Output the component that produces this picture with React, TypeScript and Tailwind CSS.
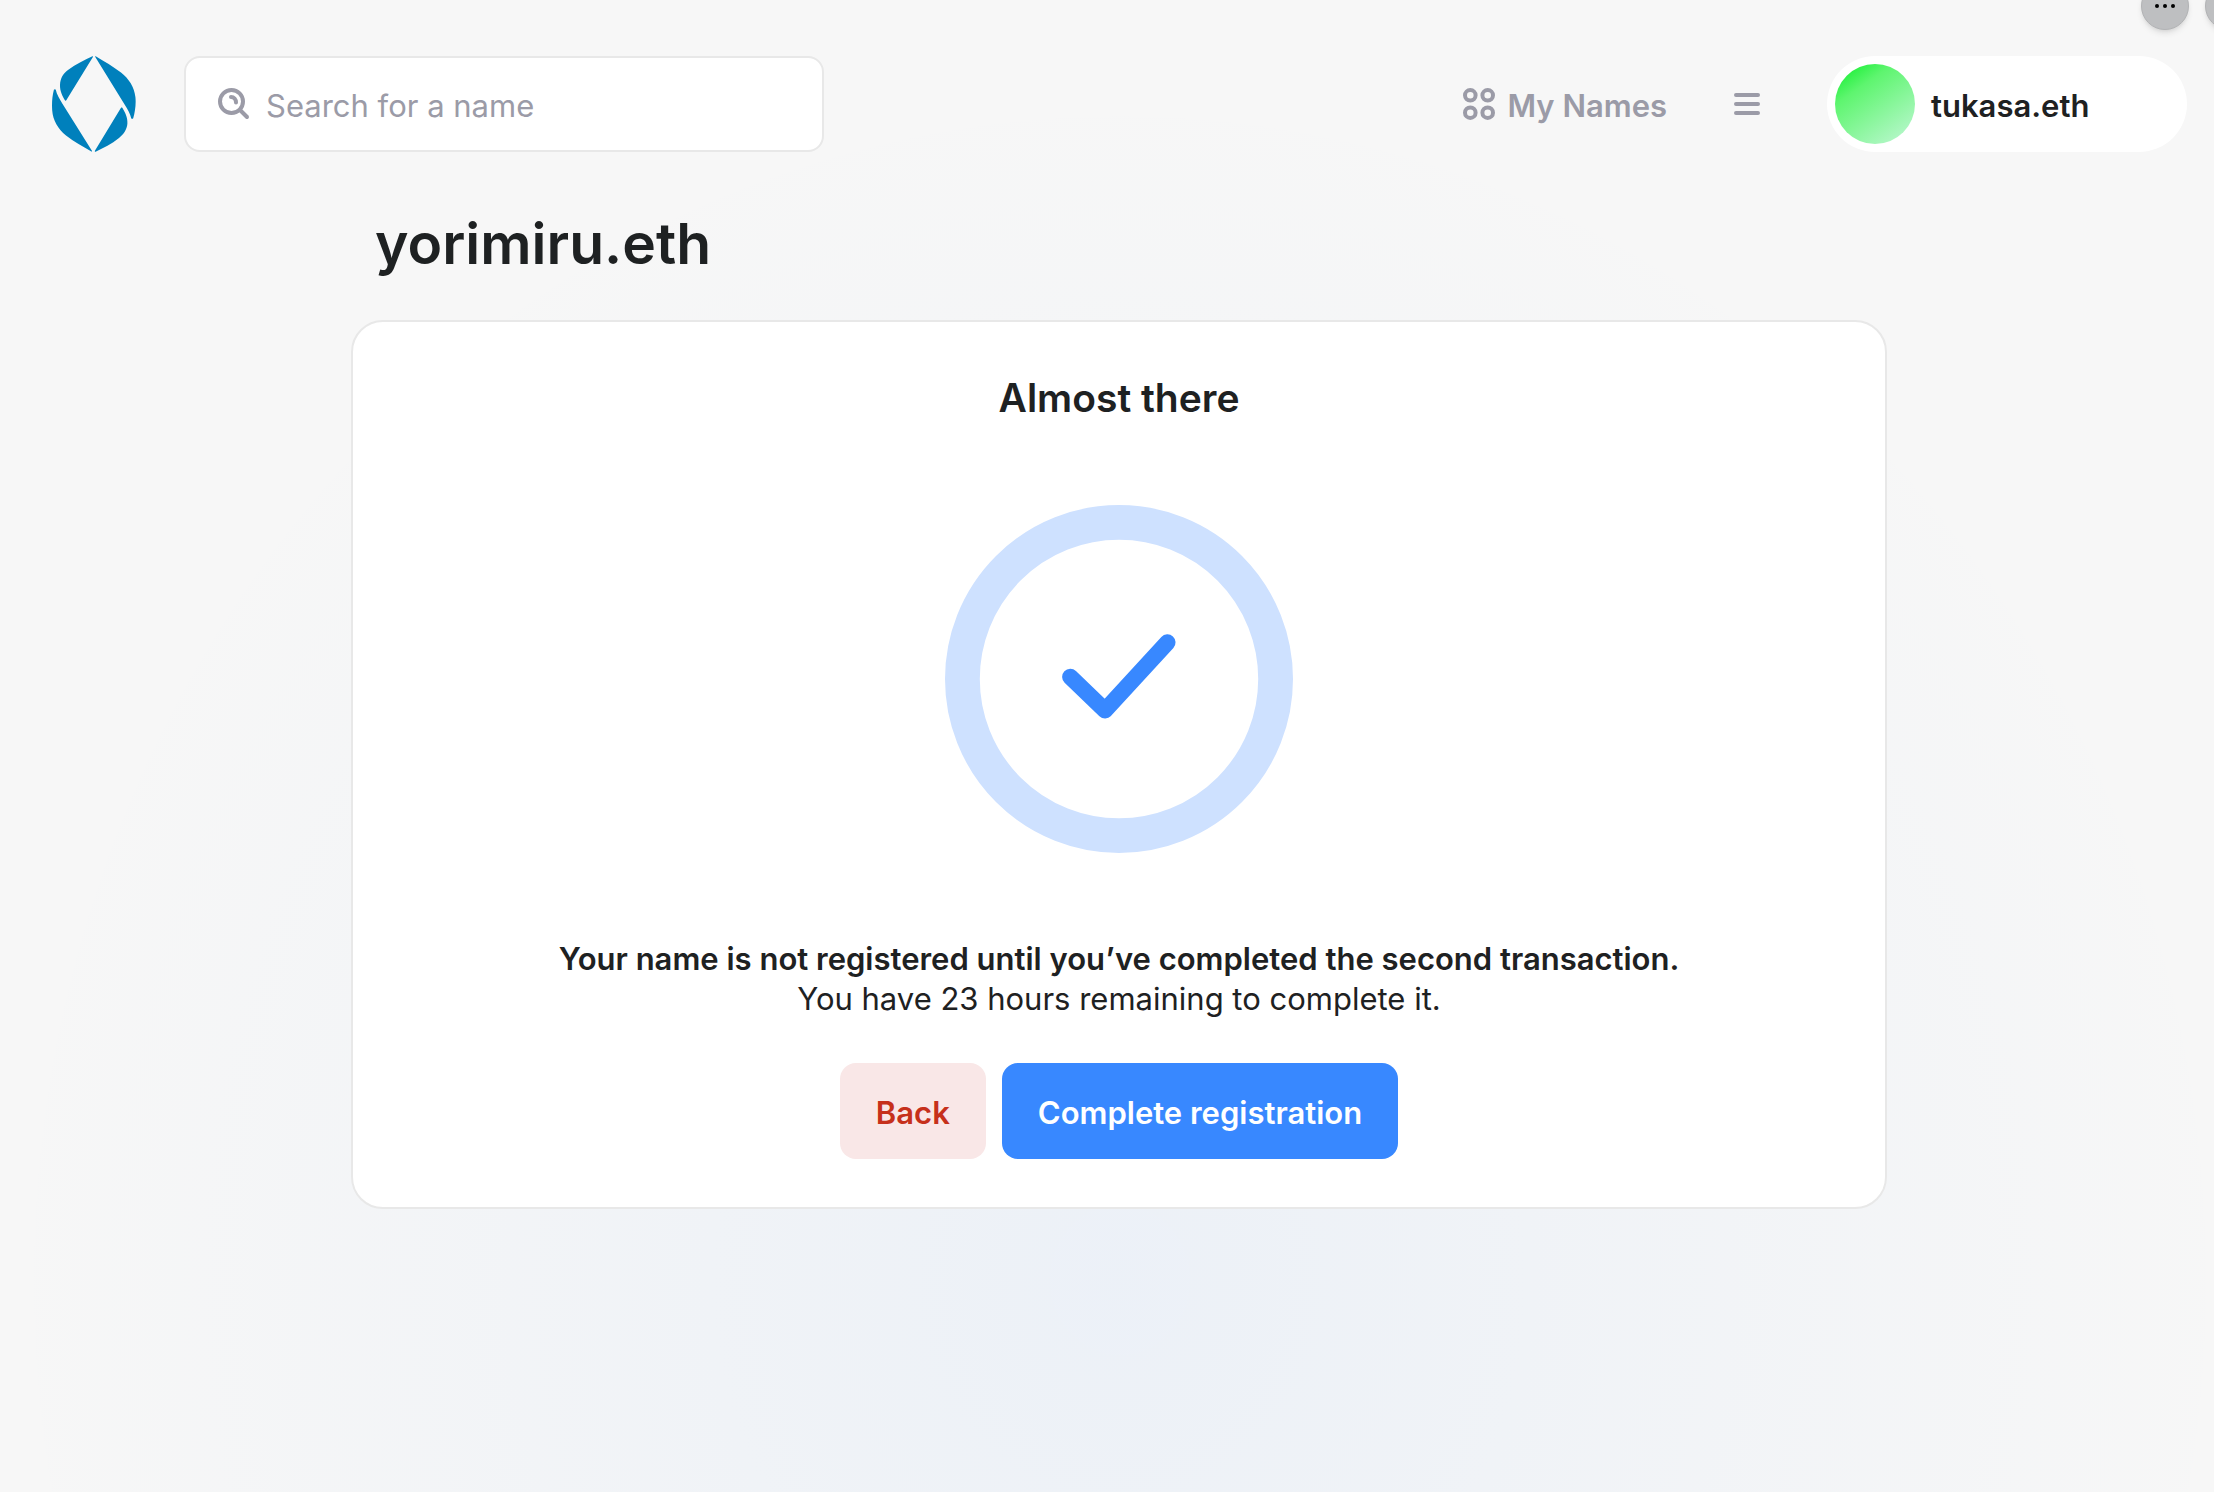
import React, { useState } from 'react';

const EnsLogo: React.FC = () => (
  <svg viewBox="0 0 84 96" className="w-[84px] h-24" fill="#0080BC" aria-hidden="true">
    <path d="M40.5 0.2C41 0 41.2 0.4 40.9 0.9L14.3 44.3C14 44.8 13.4 44.8 13.1 44.4C10.6 40.8 7.8 35 8 29C8.2 22 11.6 17.2 16 14C24 8 33 3.8 40.5 0.2Z" />
    <path d="M43.7 0.2C43.2 0 43 0.5 43.3 1L72.6 48.5C76 53.8 78.2 58 79.2 62.2C79.4 63 81 63 81.2 62.2C83 56 84.2 48 83.4 41C82.2 31 77 23 69 16.6C61 10.4 52.5 5.5 43.7 0.2Z" />
    <path d="M1.9 33.8C2.2 33 3.6 33 3.8 33.8C4.8 38.4 7.2 42.6 10.6 48L39.9 94.8C40.3 95.5 39.9 95.8 39.4 95.5C31 90.5 22 85.5 14 79.4C6 73 1 64.5 0.2 54.5C-0.3 47.5 0.2 40 1.9 33.8Z" />
    <path d="M42.9 94.7L69 51.8C69.3 51.3 70 51.3 70.3 51.8C73 56 75.8 61.5 75.4 67.5C75 73.5 71.5 78.5 67 82C59.5 88 51.5 92 43.6 95.7C43 96 42.6 95.4 42.9 94.7Z" />
  </svg>
);

const SearchIcon: React.FC = () => (
  <svg viewBox="0 0 32 32" className="w-8 h-8 shrink-0" fill="none" stroke="currentColor" strokeLinecap="round" aria-hidden="true">
    <circle cx="13.5" cy="13.5" r="11.5" strokeWidth="4" />
    <path d="M22 22L29 29" strokeWidth="4" />
    <path d="M13 9C16 9 18 11.5 18 14.5" strokeWidth="4" />
  </svg>
);

const GridIcon: React.FC = () => (
  <svg viewBox="0 0 32 32" className="w-8 h-8" fill="none" stroke="currentColor" strokeWidth="4" aria-hidden="true">
    <circle cx="7.3" cy="7.3" r="5.3" />
    <circle cx="24.7" cy="7.3" r="5.3" />
    <circle cx="7.3" cy="24.7" r="5.3" />
    <circle cx="24.7" cy="24.7" r="5.3" />
  </svg>
);

const MenuIcon: React.FC = () => (
  <svg viewBox="0 0 26 22" className="w-[26px] h-[22px]" fill="none" stroke="currentColor" strokeWidth="4" strokeLinecap="round" aria-hidden="true">
    <path d="M2 2H24M2 11H24M2 20H24" />
  </svg>
);

const CheckCircle: React.FC = () => (
  <svg viewBox="0 0 100 100" className="w-[348px] h-[348px]" fill="none" aria-hidden="true">
    <circle cx="50" cy="50" r="45" stroke="#CEE1FF" strokeWidth="10" />
    <path d="M36 49.4L46 59L63.9 39.5" stroke="#3888FF" strokeWidth="4.7" strokeLinecap="round" strokeLinejoin="round" />
  </svg>
);

const Header: React.FC = () => {
  const [query, setQuery] = useState('');

  return (
    <header className="flex items-center pt-14 pl-[52px] pr-[27px]">
      <a href="#" aria-label="ENS home">
        <EnsLogo />
      </a>
      <label className="ml-12 flex h-24 w-[640px] items-center gap-4 rounded-2xl border-2 border-[#e8e8e8] bg-white pl-8 pr-6 text-[#9b9ba7]">
        <SearchIcon />
        <input
          type="text"
          aria-label="Search for a name"
          value={query}
          onChange={(e) => setQuery(e.target.value)}
          placeholder="Search for a name"
          className="min-w-0 flex-1 bg-transparent pt-[3px] text-[31px] leading-10 text-[#1e2122] outline-none placeholder:text-[#9b9ba7]"
        />
      </label>
      <nav className="ml-auto flex items-center text-[#9b9ba7]">
        <a href="#names" className="flex items-center gap-3 text-[31px] leading-10 font-semibold">
          <GridIcon />
          <span className="pt-[3px]">My Names</span>
        </a>
        <button type="button" aria-label="Menu" className="mx-[67px]">
          <MenuIcon />
        </button>
      </nav>
      <button type="button" className="flex h-24 w-[360px] items-center gap-4 rounded-full bg-white px-2 text-[31px] leading-10 font-semibold">
        <span className="h-20 w-20 rounded-full bg-linear-[145deg,#1df038_8%,#5ef56f_30%,#b4f7c8_90%]" />
        <span className="pt-[3px]">tukasa.eth</span>
      </button>
    </header>
  );
};

const BrowserButtons: React.FC = () => (
  <div className="absolute -top-[18px] left-[calc(100%-73px)] flex gap-4">
    <button type="button" aria-label="More" className="flex h-12 w-12 items-center justify-center gap-1 rounded-full border border-[#b2b3b5] bg-[#bebfc1] shadow-md">
      <span className="h-1 w-1 rounded-full bg-black" />
      <span className="h-1 w-1 rounded-full bg-black" />
      <span className="h-1 w-1 rounded-full bg-black" />
    </button>
    <button type="button" aria-label="Close" className="h-12 w-12 rounded-full border border-[#b2b3b5] bg-[#bebfc1] shadow-md" />
  </div>
);

export default function App() {
  return (
    <div className="relative min-h-screen overflow-hidden bg-[#f7f7f7] bg-[radial-gradient(1120px_1200px_at_calc(50%+13px)_1280px,rgba(82,152,255,0.065)_0%,rgba(255,255,255,0)_100%)] font-['Inter',sans-serif] text-[#1e2122]">
      <Header />
      <main className="pl-6">
        <div className="mx-auto max-w-[1536px]">
          <h1 className="mt-14 px-6 text-[57px] leading-[72px] font-semibold">yorimiru.eth</h1>
          <section className="mt-10 flex flex-col items-center rounded-[32px] border-2 border-[#e8e8e8] bg-white px-8 pt-[51px] pb-12 text-center">
            <h2 className="text-[39px] leading-[50px] font-semibold">Almost there</h2>
            <div className="mt-[82px] mb-[86px]">
              <CheckCircle />
            </div>
            <p className="text-[31px] leading-10">
              <strong className="font-semibold">Your name is not registered until you’ve completed the second transaction.</strong>
              <br />
              You have 23 hours remaining to complete it.
            </p>
            <div className="mt-11 flex gap-4">
              <button type="button" className="h-24 rounded-2xl bg-[#f9e7e7] px-9 pt-[3px] text-[31px] leading-10 font-semibold text-[#c6301b]">
                Back
              </button>
              <button type="button" className="h-24 rounded-2xl bg-[#3888ff] px-9 pt-[3px] text-[31px] leading-10 font-semibold text-white">
                Complete registration
              </button>
            </div>
          </section>
        </div>
      </main>
      <BrowserButtons />
    </div>
  );
}
